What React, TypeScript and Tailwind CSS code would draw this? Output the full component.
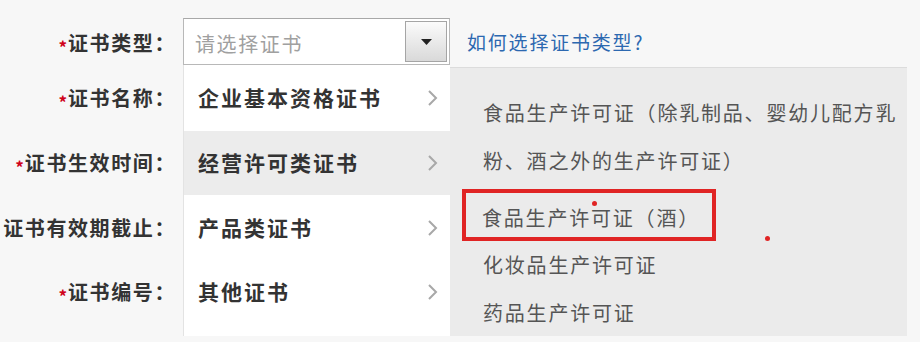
import React from "react";

const font = { fontFamily: '"Noto Sans CJK SC", "Noto Sans", sans-serif' };

function Chevron() {
  return (
    <svg width="11" height="18" viewBox="0 0 11 18" className="shrink-0">
      <polyline points="2,2 9,9 2,16" fill="none" stroke="#a8a8a8" strokeWidth="2" />
    </svg>
  );
}

function Label({ text, required, h }: { text: string; required?: boolean; h: string }) {
  return (
    <div className={`${h} flex items-center justify-end`}>
      {required && (
        <span className="text-[#d0021b] text-[17px] leading-none font-bold mt-[7px] mr-[1px]">*</span>
      )}
      <span className="text-[20px] tracking-[1.6px] font-bold text-[#333] whitespace-nowrap">{text}</span>
    </div>
  );
}

function Item({ text, h, hover }: { text: string; h: string; hover?: boolean }) {
  return (
    <div className={`${h} flex items-center justify-between pl-[14px] pr-[12px] ${hover ? "bg-[#ececec]" : "bg-white"}`}>
      <span className="text-[21px] tracking-[2px] font-bold text-[#333] whitespace-nowrap">{text}</span>
      <Chevron />
    </div>
  );
}

export default function App() {
  return (
    <div style={font} className="relative w-[920px] h-[342px] overflow-hidden bg-[#f7f7f7]">
      <div className="flex pt-[18px]">
        {/* labels */}
        <div className="w-[176px] shrink-0">
          <Label h="h-[47px] pt-[2px]" text="证书类型：" required />
          <Label h="h-[66px]" text="证书名称：" required />
          <Label h="h-[64px]" text="证书生效时间：" required />
          <Label h="h-[65px]" text="证书有效期截止：" />
          <Label h="h-[63px]" text="证书编号：" required />
        </div>

        {/* select + list */}
        <div className="ml-[7px] w-[267px] shrink-0 flex flex-col">
          <div className="h-[47px] bg-white border border-[#b8b8b8] border-t-[#a8a8a8] flex items-center justify-between pl-[11px] pr-[2px]">
            <span className="text-[20px] tracking-[1.6px] text-[#a0a0a0] pt-[4px]">请选择证书</span>
            <div className="w-[42px] h-[41px] border border-[#a5a5a5] bg-gradient-to-b from-[#fbfbfb] to-[#d9d9d9] flex items-center justify-center">
              <svg width="11" height="6" viewBox="0 0 11 6">
                <polygon points="0,0 11,0 5.5,6" fill="#222" />
              </svg>
            </div>
          </div>
          <div className="border-l border-[#e3e3e3] flex flex-col">
            <Item h="h-[66px]" text="企业基本资格证书" />
            <Item h="h-[64px]" text="经营许可类证书" hover />
            <Item h="h-[65px]" text="产品类证书" />
            <Item h="h-[63px]" text="其他证书" />
            <div className="h-[13px] bg-white" />
          </div>
        </div>

        {/* right side */}
        <div className="w-[457px] shrink-0 flex flex-col">
          <div className="h-[47px] flex items-center pl-[17px]">
            <span className="text-[19px] tracking-[1.8px] text-[#2c68b0] pt-[2px]">如何选择证书类型?</span>
          </div>
          <div className="mt-[2px] h-[269px] bg-[#ebebeb] border-t border-[#dcdcdc] pt-[21px] text-[20px] tracking-[1.8px] text-[#555]">
            <div className="pl-[33px] leading-[48px] whitespace-nowrap">
              食品生产许可证（除乳制品、婴幼儿配方乳
              <br />
              粉、酒之外的生产许可证）
            </div>
            <div className="ml-[12px] mt-[4px] w-[254px] h-[52px] border-4 border-[#e02424] pl-[16px] pt-[6px] flex items-center whitespace-nowrap">
              食品生产许可证（酒）
            </div>
            <div className="pl-[33px] leading-[48px] whitespace-nowrap">化妆品生产许可证</div>
            <div className="pl-[33px] leading-[48px] whitespace-nowrap">药品生产许可证</div>
          </div>
        </div>
      </div>

      {/* stray red marks */}
      <div className="absolute left-[592px] top-[201px] w-[5px] h-[5px] rounded-full bg-[#e02424]" />
      <div className="absolute left-[765px] top-[236px] w-[5px] h-[5px] rounded-full bg-[#e02424]" />
    </div>
  );
}
